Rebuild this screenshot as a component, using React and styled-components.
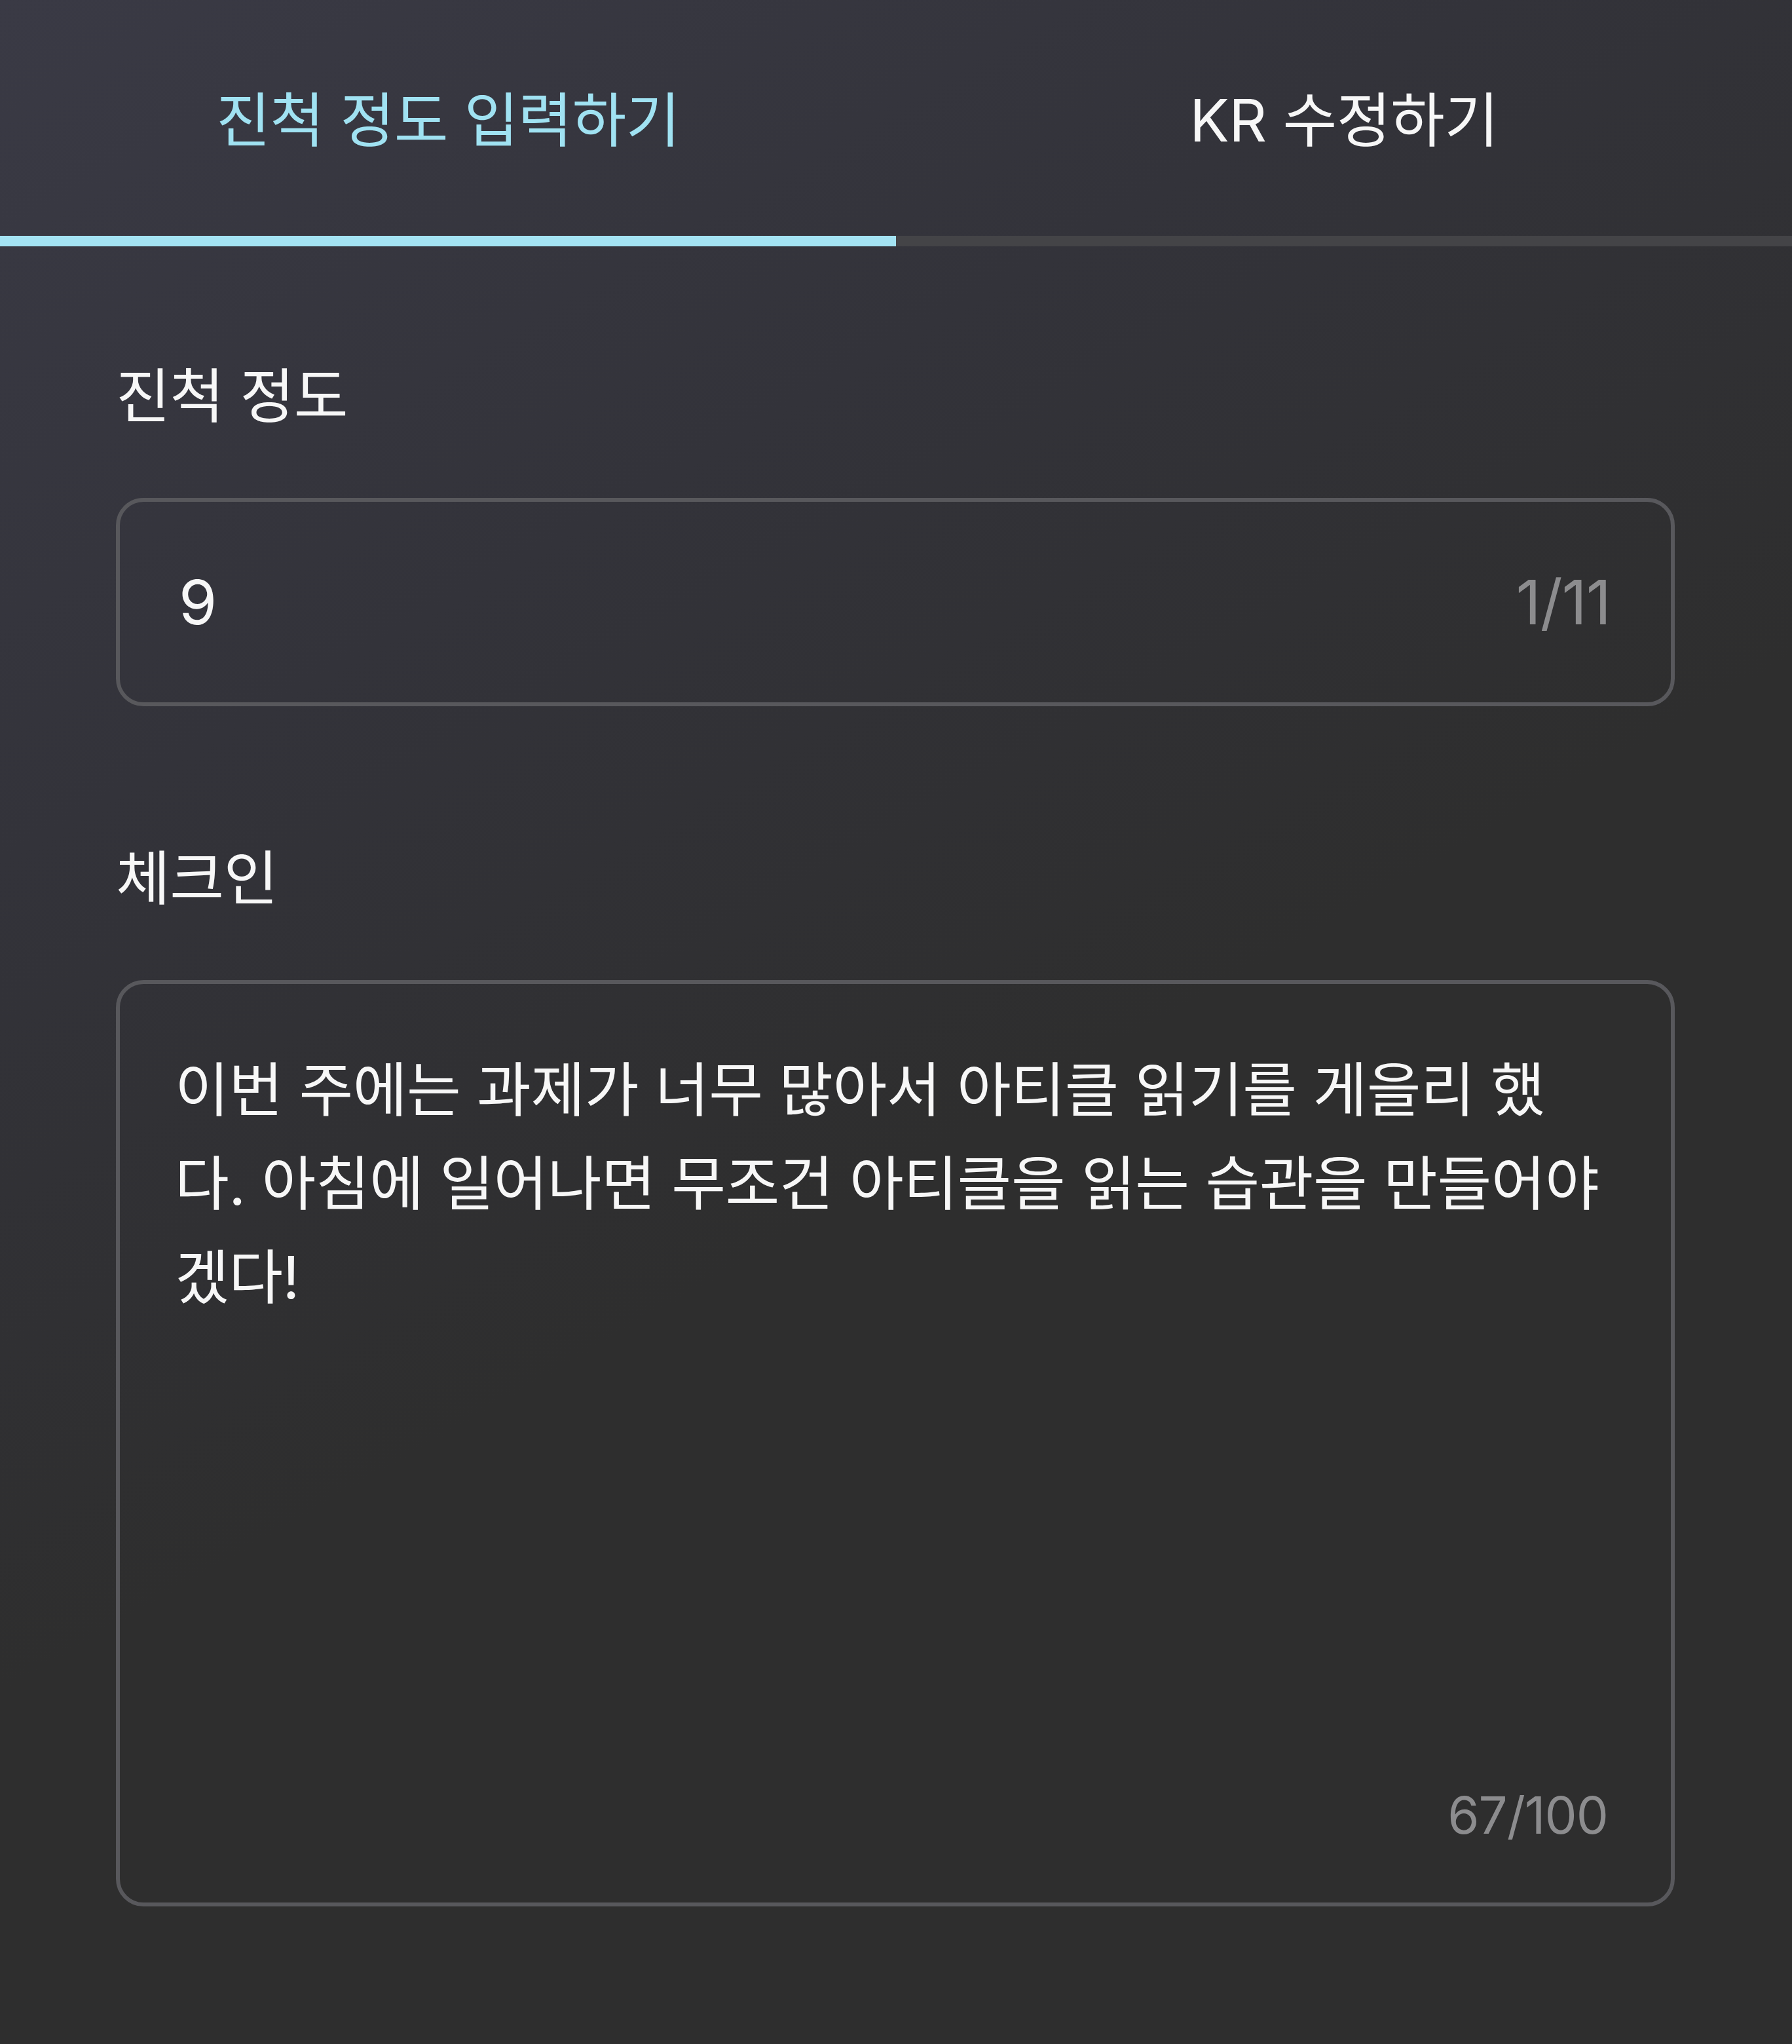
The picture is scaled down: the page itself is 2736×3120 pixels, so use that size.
import React from 'react';
import styled, { createGlobalStyle } from 'styled-components';

// ---------------- Global ----------------
const GlobalStyle = createGlobalStyle`
  html, body {
    margin: 0;
    padding: 0;
    background: #2e2e2e;
  }
  * {
    box-sizing: border-box;
  }
`;

// ---------------- Styled Components ----------------
const Page = styled.div`
  min-height: 100vh;
  background: linear-gradient(150deg, #3a3a45 0%, #33333a 28%, #2e2e2e 55%, #2e2e2e 100%);
  font-family: Inter, 'Noto Sans CJK KR', sans-serif;
  color: #f7f7f7;
`;

const TabBar = styled.div`
  display: grid;
  grid-template-columns: 1fr 1fr;
`;

const Tab = styled.div`
  height: 376px;
  padding-bottom: 6px;
  display: flex;
  align-items: center;
  justify-content: center;
  font-size: 90px;
  letter-spacing: -0.5px;
  color: ${p => (p.$active ? '#a0e2f2' : '#f7f7f7')};
  border-bottom: 16px solid ${p => (p.$active ? '#a4e3f3' : '#444447')};
`;

const Form = styled.div`
  padding: 0 179px 0 177px;
  display: flex;
  flex-direction: column;
`;

const Field = styled.div`
  display: flex;
  flex-direction: column;
  margin-top: ${p => p.$top}px;
`;

const Label = styled.div`
  font-size: 90px;
  line-height: 108px;
  letter-spacing: -0.5px;
  margin-bottom: 101px;
`;

const InputBox = styled.div`
  height: 318px;
  border: 6px solid #58585c;
  border-radius: 42px;
  padding: 0 92px 0 90px;
  display: flex;
  align-items: center;
  justify-content: space-between;
`;

const Value = styled.span`
  font-size: 94px;
`;

const Counter = styled.span`
  font-size: ${p => p.$size}px;
  line-height: ${p => p.$size + 20}px;
  color: #8c8c8e;
  letter-spacing: -1px;
`;

const TextBox = styled.div`
  height: 1414px;
  border: 6px solid #58585c;
  border-radius: 42px;
  padding: 90px 96px 84px 84px;
  display: flex;
  flex-direction: column;
  justify-content: space-between;
`;

const Text = styled.div`
  font-size: 90px;
  line-height: 143px;
  letter-spacing: -0.5px;
  white-space: pre;
`;

const CounterRow = styled.div`
  display: flex;
  justify-content: flex-end;
`;

// ---------------- Component ----------------
const checkin = [
  '이번 주에는 과제가 너무 많아서 아티클 읽기를 게을리 했',
  '다. 아침에 일어나면 무조건 아티클을 읽는 습관을 만들어야',
  '겠다!',
];

function App() {
  return (
    <>
      <GlobalStyle />
      <Page>
        <TabBar>
          <Tab $active>진척 정도 입력하기</Tab>
          <Tab>KR 수정하기</Tab>
        </TabBar>

        <Form>
          <Field $top={175}>
            <Label>진척 정도</Label>
            <InputBox>
              <Value>9</Value>
              <Counter $size={94}>1/11</Counter>
            </InputBox>
          </Field>

          <Field $top={209}>
            <Label>체크인</Label>
            <TextBox>
              <Text>{checkin.join('\n')}</Text>
              <CounterRow>
                <Counter $size={78}>67/100</Counter>
              </CounterRow>
            </TextBox>
          </Field>
        </Form>
      </Page>
    </>
  );
}

export default App;
